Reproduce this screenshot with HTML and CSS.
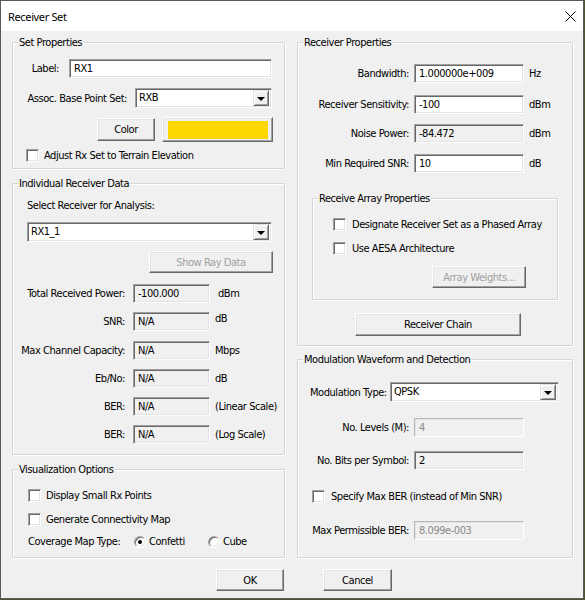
FILE: index.html
```html
<!DOCTYPE html>
<html>
<head>
<meta charset="utf-8">
<link rel="stylesheet" href="styles.css">
</head>
<body>
<div class="window">
  <div class="titlebar">
    <span class="title">Receiver Set</span>
    <svg class="close" width="11" height="11" viewBox="0 0 11 11"><path d="M0.5 0.5 L10.5 10.5 M10.5 0.5 L0.5 10.5" stroke="#000" stroke-width="1" fill="none"/></svg>
  </div>
  <div class="content">
    <div class="col col-left">
      <div class="group g-set">
        <div class="group-title">Set Properties</div>
        <div class="row s-r1"><span class="lbl s-lbl1">Label:</span><div class="edit s-edit1">RX1</div></div>
        <div class="row s-r2"><span class="lbl s-lbl2">Assoc. Base Point Set:</span><div class="combo s-combo"><span class="combo-text">RXB</span><span class="drop"><span class="tri"></span></span></div></div>
        <div class="row s-r3"><div class="btn s-color">Color</div><div class="swatch"><div class="swatch-fill"></div></div></div>
        <div class="row s-r4"><span class="check"></span><span class="cb-text">Adjust Rx Set to Terrain Elevation</span></div>
      </div>
      <div class="group g-ind">
        <div class="group-title">Individual Receiver Data</div>
        <div class="row i-r1">Select Receiver for Analysis:</div>
        <div class="row i-r2"><div class="combo i-combo"><span class="combo-text">RX1_1</span><span class="drop"><span class="tri"></span></span></div></div>
        <div class="row i-r3"><div class="btn disabled i-ray">Show Ray Data</div></div>
        <div class="row frow f-first"><span class="lbl i-lbl">Total Received Power:</span><div class="edit ro i-field">-100.000</div><span class="unit unit-wide">dBm</span></div>
        <div class="row frow f-9"><span class="lbl i-lbl">SNR:</span><div class="edit ro i-field">N/A</div><span class="unit unit-up">dB</span></div>
        <div class="row frow f-10"><span class="lbl i-lbl">Max Channel Capacity:</span><div class="edit ro i-field">N/A</div><span class="unit">Mbps</span></div>
        <div class="row frow f-9"><span class="lbl i-lbl">Eb/No:</span><div class="edit ro i-field">N/A</div><span class="unit">dB</span></div>
        <div class="row frow f-9"><span class="lbl i-lbl">BER:</span><div class="edit ro i-field">N/A</div><span class="unit">(Linear Scale)</span></div>
        <div class="row frow f-9"><span class="lbl i-lbl">BER:</span><div class="edit ro i-field">N/A</div><span class="unit">(Log Scale)</span></div>
      </div>
      <div class="group g-vis">
        <div class="group-title">Visualization Options</div>
        <div class="row v-r1"><span class="check"></span><span class="cb-text">Display Small Rx Points</span></div>
        <div class="row v-r2"><span class="check"></span><span class="cb-text">Generate Connectivity Map</span></div>
        <div class="row v-r3"><span class="v-lbl">Coverage Map Type:</span><span class="opt opt1"><span class="radio on"></span><span class="rd-text">Confetti</span></span><span class="opt"><span class="radio"></span><span class="rd-text">Cube</span></span></div>
      </div>
    </div>
    <div class="col col-right">
      <div class="group g-recv">
        <div class="group-title">Receiver Properties</div>
        <div class="row frow r-first"><span class="lbl r-lbl">Bandwidth:</span><div class="edit r-field">1.000000e+009</div><span class="unit">Hz</span></div>
        <div class="row frow r-12"><span class="lbl r-lbl">Receiver Sensitivity:</span><div class="edit r-field">-100</div><span class="unit">dBm</span></div>
        <div class="row frow r-10"><span class="lbl r-lbl">Noise Power:</span><div class="edit ro r-field">-84.472</div><span class="unit">dBm</span></div>
        <div class="row frow r-11"><span class="lbl r-lbl">Min Required SNR:</span><div class="edit r-field">10</div><span class="unit">dB</span></div>
        <div class="group g-array">
          <div class="group-title">Receive Array Properties</div>
          <div class="row a-r1"><span class="check"></span><span class="cb-text a-text">Designate Receiver Set as a Phased Array</span></div>
          <div class="row a-r2"><span class="check"></span><span class="cb-text a-text">Use AESA Architecture</span></div>
          <div class="row a-r3"><div class="btn disabled a-weights">Array Weights...</div></div>
        </div>
        <div class="row r-chain-row"><div class="btn r-chain">Receiver Chain</div></div>
      </div>
      <div class="group g-mod">
        <div class="group-title">Modulation Waveform and Detection</div>
        <div class="row m-r1"><span class="m-lbl">Modulation Type:</span><div class="combo m-combo"><span class="combo-text">QPSK</span><span class="drop"><span class="tri"></span></span></div></div>
        <div class="row frow m-r2"><span class="lbl r-lbl">No. Levels (M):</span><div class="edit dis r-field">4</div></div>
        <div class="row frow m-r3"><span class="lbl r-lbl">No. Bits per Symbol:</span><div class="edit ro r-field">2</div></div>
        <div class="row m-r4"><span class="check"></span><span class="cb-text a-text">Specify Max BER (instead of Min SNR)</span></div>
        <div class="row frow m-r5"><span class="lbl r-lbl">Max Permissible BER:</span><div class="edit dis r-field">8.099e-003</div></div>
      </div>
    </div>
  </div>
  <div class="footer">
    <div class="btn ok">OK</div>
    <div class="btn cancel">Cancel</div>
  </div>
</div>
</body>
</html>
```
FILE: styles.css
```css
* { box-sizing: border-box; }
html, body { margin: 0; padding: 0; }
body {
  background: #4f5636;
  width: 585px;
  height: 600px;
  overflow: hidden;
  font-family: "DejaVu Sans Condensed", "Liberation Sans", sans-serif;
  font-size: 11px;
  letter-spacing: -0.45px;
  color: #000;
}
.window {
  width: 584px;
  height: 599px;
  border: 1px solid #5a5a5a;
  background: #f0f0f0;
  display: flex;
  flex-direction: column;
}
.titlebar {
  height: 30px;
  background: #fff;
  display: flex;
  align-items: center;
  justify-content: space-between;
  padding: 0 7px 0 7px;
}
.title {
  font-family: "Noto Sans", "Open Sans", sans-serif;
  font-size: 11px;
  letter-spacing: -0.35px;
  color: #000;
}
.close { display: block; }
.content {
  display: flex;
  gap: 12px;
  padding: 11px 0 0 11px;
}
.col { display: flex; flex-direction: column; }
.col-left { width: 273px; gap: 14px; }
.col-right { width: 276px; gap: 13px; }

.group {
  border: 1px solid #d5d5d5;
  box-shadow: 1px 1px 0 #fff, inset 1px 1px 0 #fff;
}
.group-title {
  display: table;
  height: 13px;
  line-height: 13px;
  margin: -7px 0 0 5px;
  padding: 0 1px;
  background: #f0f0f0;
  white-space: nowrap;
}
.g-set { height: 127px; }
.g-ind { height: 272px; }
.g-vis { height: 89px; }
.g-recv { height: 304px; }
.g-mod { height: 199px; }

.row { display: flex; align-items: center; white-space: nowrap; }
.lbl { text-align: right; flex: none; }

.edit {
  height: 19px;
  background: #fff;
  border: 1px solid;
  border-color: #a0a0a0 #fff #fff #a0a0a0;
  box-shadow: inset 1px 1px 0 #696969, inset -1px -1px 0 #e3e3e3;
  padding: 0 3px 0 4px;
  line-height: 17px;
  flex: none;
  overflow: hidden;
}
.edit.ro { background: #f0f0f0; }
.edit.dis {
  background: #f0f0f0;
  color: #8a8a8a;
  border-color: #b8b8b8 #fff #fff #b8b8b8;
  box-shadow: inset 1px 1px 0 #e3e3e3, inset -1px -1px 0 #f0f0f0;
}

.combo {
  height: 20px;
  background: #fff;
  border: 1px solid;
  border-color: #a0a0a0 #fff #fff #a0a0a0;
  box-shadow: inset 1px 1px 0 #696969, inset -1px -1px 0 #e3e3e3;
  padding: 2px 2px 2px 2px;
  display: flex;
  align-items: center;
  flex: none;
}
.combo-text { flex: 1; padding-left: 1px; line-height: 14px; }
.drop {
  width: 16px;
  height: 16px;
  background: #f0f0f0;
  border: 1px solid;
  border-color: #e3e3e3 #696969 #696969 #e3e3e3;
  box-shadow: inset 1px 1px 0 #fff, inset -1px -1px 0 #a0a0a0;
  display: flex;
  align-items: center;
  justify-content: center;
  flex: none;
}
.tri {
  width: 0; height: 0;
  border-left: 4px solid transparent;
  border-right: 4px solid transparent;
  border-top: 4px solid #000;
  margin-top: 1px;
}

.btn {
  background: #f0f0f0;
  border: 1px solid;
  border-color: #fff #696969 #696969 #fff;
  box-shadow: inset -1px -1px 0 #a0a0a0, inset 1px 1px 0 #e3e3e3;
  display: flex;
  align-items: center;
  justify-content: center;
  flex: none;
}
.btn.disabled { color: #a0a0a0; }

.check {
  width: 13px;
  height: 13px;
  background: #fff;
  border: 1px solid;
  border-color: #a0a0a0 #fff #fff #a0a0a0;
  box-shadow: inset 1px 1px 0 #696969, inset -1px -1px 0 #e3e3e3;
  flex: none;
}
.cb-text { margin-left: 5px; }
.a-text { margin-left: 6px; }

.radio {
  width: 12px;
  height: 12px;
  border-radius: 50%;
  background: #fff;
  border: 1px solid;
  border-color: #a0a0a0 #fff #fff #a0a0a0;
  box-shadow: inset 1px 1px 0 #696969, inset -1px -1px 0 #e3e3e3;
  flex: none;
  display: flex;
  align-items: center;
  justify-content: center;
}
.radio.on::before {
  content: "";
  width: 4px;
  height: 4px;
  border-radius: 50%;
  background: #000;
}
.opt { display: flex; align-items: center; }
.opt1 { width: 74px; }
.rd-text { margin-left: 3px; }

/* Set Properties */
.s-r1 { margin-top: 10px; height: 19px; }
.s-lbl1 { width: 46px; }
.s-edit1 { margin-left: 10px; width: 203px; }
.s-r2 { margin-top: 10px; height: 20px; }
.s-lbl2 { width: 114px; }
.s-combo { margin-left: 8px; width: 137px; }
.s-r3 { margin-top: 9px; height: 25px; }
.s-color { margin-left: 84px; width: 58px; height: 23px; }
.swatch {
  margin-left: 7px;
  width: 111px;
  height: 25px;
  background: #f0f0f0;
  border: 1px solid;
  border-color: #fff #696969 #696969 #fff;
  box-shadow: inset -1px -1px 0 #a0a0a0, inset 1px 1px 0 #e3e3e3;
  padding: 3px 4px 1px 5px;
}
.swatch-fill { width: 100%; height: 18px; background: #ffd700; }
.s-r4 { margin-top: 7px; height: 13px; padding-left: 13px; }

/* Individual */
.i-r1 { margin-top: 9px; height: 13px; padding-left: 14px; }
.i-r2 { margin-top: 10px; height: 20px; padding-left: 14px; }
.i-combo { width: 245px; }
.i-r3 { margin-top: 9px; height: 22px; padding-left: 136px; }
.i-ray { width: 124px; height: 22px; }
.frow { height: 19px; }
.f-first { margin-top: 11px; }
.f-9 { margin-top: 9px; }
.f-10 { margin-top: 10px; }
.i-lbl { width: 112px; }
.i-field { margin-left: 8px; width: 77px; }
.unit { margin-left: 5px; }
.unit-wide { margin-left: 8px; }
.unit-up { position: relative; top: -3px; }

/* Visualization */
.v-r1 { margin-top: 13px; height: 13px; padding-left: 15px; }
.v-r2 { margin-top: 11px; height: 13px; padding-left: 15px; }
.v-r3 { margin-top: 9px; height: 13px; padding-left: 15px; }
.v-lbl { width: 106px; }

/* Receiver properties */
.r-first { margin-top: 15px; }
.r-12 { margin-top: 12px; }
.r-10 { margin-top: 10px; }
.r-11 { margin-top: 11px; }
.r-lbl { width: 111px; }
.r-field { margin-left: 5px; width: 110px; }
.g-array {
  margin: 25px 0 0 14px;
  width: 246px;
  height: 102px;
}
.a-r1 { margin-top: 13px; height: 13px; padding-left: 20px; }
.a-r2 { margin-top: 11px; height: 13px; padding-left: 20px; }
.a-r3 { margin-top: 11px; height: 22px; padding-left: 119px; }
.a-weights { width: 94px; height: 22px; }
.r-chain-row { margin-top: 13px; padding-left: 57px; }
.r-chain { width: 166px; height: 23px; }

/* Modulation */
.m-r1 { margin-top: 16px; height: 20px; padding-left: 12px; }
.m-lbl { width: 80px; }
.m-combo { width: 169px; }
.m-r2 { margin-top: 16px; }
.m-r3 { margin-top: 14px; }
.m-r4 { margin-top: 20px; height: 13px; padding-left: 14px; }
.m-r5 { margin-top: 18px; }

/* Footer */
.footer {
  display: flex;
  gap: 39px;
  padding: 11px 0 0 215px;
}
.ok { width: 68px; height: 22px; }
.cancel { width: 69px; height: 22px; }
```
